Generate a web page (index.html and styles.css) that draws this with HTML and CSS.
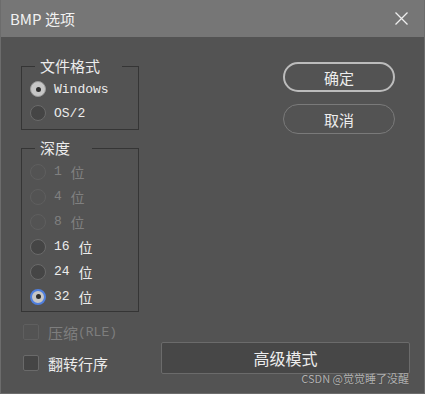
FILE: index.html
```html
<!DOCTYPE html>
<html lang="zh-CN">
<head>
  <meta charset="UTF-8">
  <meta name="viewport" content="width=device-width, initial-scale=1.0">
  <title>BMP 选项</title>
  <link rel="stylesheet" href="styles.css">
</head>
<body>
  <div class="dialog">
    <div class="titlebar">
      <span class="title">BMP 选项</span>
      <button class="close" aria-label="关闭">
        <svg width="13" height="13" viewBox="0 0 13 13">
          <path d="M0.5 0.5 L12.5 12.5 M12.5 0.5 L0.5 12.5" stroke="#eeeeee" stroke-width="1.3" fill="none"/>
        </svg>
      </button>
    </div>

    <div class="content">
      <div class="top">
        <div class="groups">
          <fieldset class="group format">
            <legend>文件格式</legend>
            <label class="option"><input type="radio" name="format" checked>Windows</label>
            <label class="option"><input type="radio" name="format">OS/2</label>
          </fieldset>

          <fieldset class="group depth">
            <legend>深度</legend>
            <label class="option"><input type="radio" name="depth" disabled>1 <span class="unit">位</span></label>
            <label class="option"><input type="radio" name="depth" disabled>4 <span class="unit">位</span></label>
            <label class="option"><input type="radio" name="depth" disabled>8 <span class="unit">位</span></label>
            <label class="option"><input type="radio" name="depth">16 <span class="unit">位</span></label>
            <label class="option"><input type="radio" name="depth">24 <span class="unit">位</span></label>
            <label class="option"><input type="radio" name="depth" class="focused" checked>32 <span class="unit">位</span></label>
          </fieldset>
        </div>

        <div class="actions">
          <button class="pill primary">确定</button>
          <button class="pill">取消</button>
        </div>
      </div>

      <div class="bottom">
        <div class="checks">
          <label class="check disabled"><input type="checkbox" disabled>压缩<span class="mono">(RLE)</span></label>
          <label class="check"><input type="checkbox">翻转行序</label>
        </div>
        <button class="advanced">高级模式</button>
      </div>
    </div>

    <div class="watermark">CSDN @觉觉睡了没醒</div>
  </div>
</body>
</html>
```

FILE: styles.css
```css
* {
  box-sizing: border-box;
}

body {
  margin: 0;
  background: #535353;
  font-family: "Noto Sans CJK SC", "Noto Sans", sans-serif;
}

.dialog {
  position: relative;
  width: 425px;
  height: 394px;
  background: #535353;
  border: 1px solid #6c6c6c;
  border-top: none;
  color: #e8e8e8;
}

.titlebar {
  height: 37px;
  background: #767676;
  display: flex;
  align-items: center;
  justify-content: space-between;
  padding: 0 16px 0 9px;
}

.title {
  font-size: 15px;
  color: #f2f2f2;
  line-height: 1;
  margin-top: -1px;
}

.close {
  background: none;
  border: none;
  padding: 0;
  width: 13px;
  height: 13px;
  display: flex;
  margin-top: -1px;
}

.content {
  padding: 21px 14px 0 20px;
}

.top {
  display: flex;
  justify-content: space-between;
}

.groups {
  width: 118px;
  display: flex;
  flex-direction: column;
  gap: 10px;
}

.group {
  margin: 0;
  padding: 3px 0 4px 0;
  border: 1px solid #353535;
  min-width: 0;
}

.group legend {
  margin-left: 13px;
  padding: 0 22px 0 5px;
  font-size: 15px;
  line-height: 16px;
  color: #ececec;
}

.depth {
  padding: 3px 0 2px 0;
}

.option {
  display: flex;
  align-items: center;
  height: 24px;
  padding-left: 8px;
  font-family: "Liberation Mono", "Noto Sans CJK SC", monospace;
  font-size: 13px;
  color: #ececec;
  white-space: pre;
}

.unit {
  font-family: "Noto Sans CJK SC", sans-serif;
  font-size: 14px;
  margin-left: 1px;
}

.depth .option {
  height: 25px;
}

.option input {
  appearance: none;
  margin: 0 8px 0 0;
  width: 16px;
  height: 16px;
  border-radius: 50%;
  border: 1px solid #6a6a6a;
  background: #454545;
  display: grid;
  place-items: center;
}

.option input:checked {
  background: #c6c6c6;
  border-color: #9a9a9a;
}

.option input:checked::after {
  content: "";
  width: 5px;
  height: 5px;
  border-radius: 50%;
  background: #2e2e2e;
}

.option input.focused {
  border: 2px solid #4f7fdf;
}

.option input:disabled {
  background: #535353;
  border-color: #5f5f5f;
}

.option:has(input:disabled) {
  color: #808080;
}

.actions {
  display: flex;
  flex-direction: column;
  gap: 12px;
  margin: 4px 15px 0 0;
}

.pill {
  width: 112px;
  height: 30px;
  border-radius: 15px;
  background: transparent;
  border: 1px solid #7a7a7a;
  color: #ededed;
  font-family: "Noto Sans CJK SC", sans-serif;
  font-size: 15px;
  padding: 0;
}

.pill.primary {
  border: 2px solid #bcbcbc;
}

.bottom {
  display: flex;
  justify-content: space-between;
  align-items: flex-start;
  margin-top: 8px;
}

.checks {
  display: flex;
  flex-direction: column;
  gap: 7px;
  margin-left: 2px;
}

.check {
  display: flex;
  align-items: center;
  height: 24px;
  font-size: 15px;
  color: #ececec;
}

.check input {
  appearance: none;
  margin: 0 9px 0 0;
  width: 16px;
  height: 16px;
  border-radius: 2px;
  border: 1px solid #6a6a6a;
  background: #454545;
}

.check.disabled {
  color: #7e7e7e;
}

.check input:disabled {
  background: #535353;
  border-color: #5f5f5f;
}

.mono {
  font-family: "Liberation Mono", monospace;
  font-size: 13px;
}

.advanced {
  width: 249px;
  height: 32px;
  margin-top: 22px;
  background: #474747;
  border: 1px solid #6b6b6b;
  border-radius: 2px;
  color: #ededed;
  font-family: "Noto Sans CJK SC", sans-serif;
  font-size: 16px;
  padding: 0;
}

.watermark {
  position: absolute;
  right: 15px;
  bottom: 8px;
  font-size: 11px;
  line-height: 14px;
  color: rgba(200, 200, 200, 0.85);
  text-shadow: 0 0 1px rgba(40, 40, 40, 0.6);
}
```
